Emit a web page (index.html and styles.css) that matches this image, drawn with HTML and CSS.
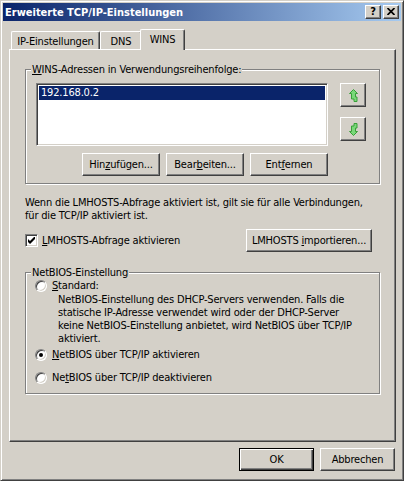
FILE: index.html
```html
<!DOCTYPE html>
<html lang="de">
<head>
<meta charset="utf-8">
<title>Erweiterte TCP/IP-Einstellungen</title>
<link rel="stylesheet" href="styles.css">
</head>
<body>
<div class="window">
  <div class="titlebar">
    <span class="title">Erweiterte TCP/IP-Einstellungen</span>
    <div class="tb-buttons">
      <span class="tb-btn">?</span>
      <span class="tb-btn"><svg width="8" height="7" viewBox="0 0 8 7"><path d="M0.5 0 L7.5 7 M7.5 0 L0.5 7" stroke="#000" stroke-width="1.7"/></svg></span>
    </div>
  </div>
  <div class="client">
    <div class="tabs">
      <div class="tab tab-ip">IP-Einstellungen</div>
      <div class="tab tab-dns">DNS</div>
      <div class="tab tab-wins active">WINS</div>
    </div>
    <div class="panel">
      <fieldset class="group group-wins">
        <legend><u>W</u>INS-Adressen in Verwendungsreihenfolge:</legend>
        <div class="list-row">
          <div class="listbox">
            <div class="item selected">192.168.0.2</div>
          </div>
          <div class="arrows">
            <div class="btn arrow-btn"><svg width="9" height="13" viewBox="0 0 9 13"><path d="M4.5 0.5 L8.5 4.5 L6.5 4.5 L6.5 8 L8 8 L8 12.5 L5 12.5 L5 10 L2.5 10 L2.5 4.5 L0.5 4.5 Z" fill="#7ad87a" stroke="#38a038" stroke-width="1" stroke-linejoin="miter"/></svg></div>
            <div class="btn arrow-btn"><svg width="9" height="13" viewBox="0 0 9 13"><path d="M4.5 12.5 L8.5 8.5 L6.5 8.5 L6.5 5 L8 5 L8 0.5 L5 0.5 L5 3 L2.5 3 L2.5 8.5 L0.5 8.5 Z" fill="#7ad87a" stroke="#38a038" stroke-width="1" stroke-linejoin="miter"/></svg></div>
          </div>
        </div>
        <div class="btn-row">
          <div class="btn btn-small"><span>Hin<u>z</u>ufügen...</span></div>
          <div class="btn btn-small"><span>Bear<u>b</u>eiten...</span></div>
          <div class="btn btn-small"><span>Ent<u>f</u>ernen</span></div>
        </div>
      </fieldset>
      <p class="note">Wenn die LMHOSTS-Abfrage aktiviert ist, gilt sie für alle Verbindungen,<br>für die TCP/IP aktiviert ist.</p>
      <div class="check-row">
        <span class="checkbox"><svg width="7" height="7" viewBox="0 0 7 7"><path d="M0 2 L2 4 L7 -1 L7 2 L2 7 L0 5 Z" fill="#000"/></svg></span>
        <span class="check-label"><u>L</u>MHOSTS-Abfrage aktivieren</span>
        <div class="btn btn-import"><span>LMHOSTS <u>i</u>mportieren...</span></div>
      </div>
      <fieldset class="group group-netbios">
        <legend>NetBIOS-Einstellung</legend>
        <div class="radio-row">
          <span class="radio"></span>
          <span><u>S</u>tandard:</span>
        </div>
        <p class="desc">NetBIOS-Einstellung des DHCP-Servers verwenden. Falls die<br>statische IP-Adresse verwendet wird oder der DHCP-Server<br>keine NetBIOS-Einstellung anbietet, wird NetBIOS über TCP/IP<br>aktiviert.</p>
        <div class="radio-row row-on">
          <span class="radio checked"></span>
          <span><u>N</u>etBIOS über TCP/IP aktivieren</span>
        </div>
        <div class="radio-row row-off">
          <span class="radio"></span>
          <span>Ne<u>t</u>BIOS über TCP/IP deaktivieren</span>
        </div>
      </fieldset>
    </div>
    <div class="footer">
      <div class="btn btn-foot btn-default">OK</div>
      <div class="btn btn-foot">Abbrechen</div>
    </div>
  </div>
</div>
</body>
</html>
```
FILE: styles.css
```css
* { box-sizing: border-box; }
html, body { margin: 0; padding: 0; }
body {
  width: 404px;
  height: 481px;
  overflow: hidden;
  background: #D4D0C8;
  color: #000;
  font-family: "DejaVu Sans Condensed", "DejaVu Sans", "Liberation Sans", sans-serif;
  font-stretch: condensed;
  font-size: 11px;
  line-height: 13px;
  letter-spacing: -0.18px;
}
u { text-decoration-thickness: 1px; text-underline-offset: 1px; }

.window {
  width: 404px;
  height: 481px;
  border: 1px solid;
  border-color: #D4D0C8 #404040 #404040 #D4D0C8;
  box-shadow: inset 1px 1px #fff, inset -1px -1px #808080;
  padding: 2px;
  display: flex;
  flex-direction: column;
}

.titlebar {
  height: 18px;
  flex: none;
  display: flex;
  align-items: center;
  padding: 0 2px 0 2px;
  background: linear-gradient(to right, #0A246A, #A6CAF0);
}
.title {
  color: #fff;
  font-weight: bold;
  font-size: 11px;
  letter-spacing: 0;
}
.tb-buttons {
  margin-left: auto;
  display: flex;
  gap: 2px;
}
.tb-btn {
  width: 16px;
  height: 14px;
  background: #D4D0C8;
  border: 1px solid;
  border-color: #fff #404040 #404040 #fff;
  box-shadow: inset -1px -1px #808080;
  display: flex;
  align-items: center;
  justify-content: center;
  font-weight: bold;
  font-size: 11px;
  line-height: 11px;
  padding-bottom: 1px;
}

.client {
  flex: 1;
  display: flex;
  flex-direction: column;
  padding: 8px 5px 7px 6px;
}

.tabs {
  height: 20px;
  flex: none;
  display: flex;
  align-items: flex-end;
  padding-left: 2px;
}
.tab {
  height: 18px;
  border-top: 1px solid #fff;
  border-left: 1px solid #fff;
  border-right: 1px solid #404040;
  box-shadow: inset -1px 0 #808080;
  border-top-left-radius: 2px;
  border-top-right-radius: 2px;
  display: flex;
  justify-content: center;
  padding-top: 3px;
  background: #D4D0C8;
}
.tab-ip { width: 89px; }
.tab-dns { width: 42px; }
.tab-wins { width: 45px; }
.tab.active {
  height: 21px;
  margin: 0 -2px -1px -2px;
  position: relative;
  z-index: 1;
  padding-top: 3px;
}

.panel {
  height: 393px;
  flex: none;
  border: 1px solid;
  border-color: #fff #404040 #404040 #fff;
  box-shadow: inset -1px -1px #808080;
  padding: 13px 15px 0 15px;
}

.group {
  margin: 0;
  min-width: 0;
  border: 1px solid #808080;
  box-shadow: inset 1px 1px #fff, 1px 1px #fff;
}
.group legend {
  padding: 0 1px;
  background: #D4D0C8;
  line-height: 13px;
}
.group-wins { padding: 7px 13px 7px 10px; }
.group-wins legend { margin-left: -5px; }

.list-row { display: flex; }
.listbox {
  width: 292px;
  height: 63px;
  background: #fff;
  border: 1px solid;
  border-color: #808080 #fff #fff #808080;
  box-shadow: inset 1px 1px #404040, inset -1px -1px #D4D0C8;
  padding: 2px;
}
.item { line-height: 14px; height: 14px; padding-left: 2px; }
.item.selected { background: #0A246A; color: #fff; }

.arrows {
  margin-left: 12px;
  display: flex;
  flex-direction: column;
  gap: 10px;
}
.btn {
  background: #D4D0C8;
  border: 1px solid;
  border-color: #fff #404040 #404040 #fff;
  box-shadow: inset -1px -1px #808080;
  display: flex;
  align-items: center;
  justify-content: center;
}
.arrow-btn { width: 26px; height: 24px; }

.btn-row {
  width: 292px;
  margin-top: 7px;
  display: flex;
  justify-content: flex-end;
  gap: 6px;
}
.btn-small { width: 78px; height: 23px; }

.note { margin: 12px 0 0 0; }

.check-row {
  margin-top: 7px;
  display: flex;
  align-items: center;
  height: 23px;
}
.checkbox {
  width: 13px;
  height: 13px;
  background: #fff;
  border: 1px solid;
  border-color: #808080 #fff #fff #808080;
  box-shadow: inset 1px 1px #404040, inset -1px -1px #D4D0C8;
  display: flex;
  align-items: center;
  justify-content: center;
}
.check-label { margin-left: 4px; }
.btn-import { width: 126px; height: 23px; margin-left: auto; margin-right: 8px; }

.group-netbios { margin-top: 14px; padding: 0 10px 9px 9px; }
.group-netbios legend { margin-left: -4px; }
.radio-row { display: flex; align-items: center; height: 13px; gap: 5px; }
.radio {
  width: 12px;
  height: 12px;
  border-radius: 50%;
  background: #fff;
  border: 1px solid;
  border-color: #808080 #fff #fff #808080;
  box-shadow: inset 1px 1px #404040, inset -1px -1px #D4D0C8;
  display: flex;
  align-items: center;
  justify-content: center;
}
.radio.checked::after {
  content: "";
  width: 4px;
  height: 4px;
  border-radius: 50%;
  background: #000;
}
.desc { margin: 1px 0 0 23px; }
.row-on { margin-top: 3px; }
.row-off { margin-top: 10px; }

.footer {
  margin-top: 6px;
  display: flex;
  justify-content: flex-end;
  gap: 6px;
  padding-right: 1px;
}
.btn-foot { width: 75px; height: 23px; }
.btn-default {
  border-color: #000;
  box-shadow: inset 1px 1px #fff, inset -1px -1px #404040, inset -2px -2px #808080;
}
```
